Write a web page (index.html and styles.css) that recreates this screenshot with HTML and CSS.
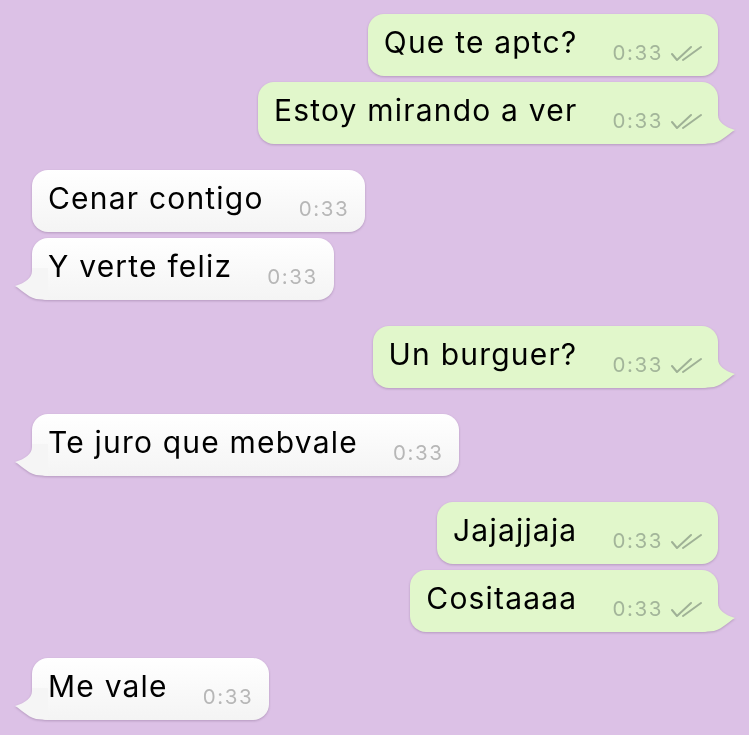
FILE: index.html
```html
<!DOCTYPE html>
<html>
<head>
<meta charset="utf-8">
<link rel="stylesheet" href="styles.css">
</head>
<body>
<div class="chat">
  <div class="group out">
    <div class="row"><div class="bubble"><span class="text">Que te aptc?</span><span class="meta"><span class="time">0:33</span><svg class="ticks" viewBox="0 0 31 17"><path d="M1 9 L6 15 L20 2 M12 15 L30 2"/></svg></span></div></div>
    <div class="row"><div class="bubble tail"><span class="text">Estoy mirando a ver</span><span class="meta"><span class="time">0:33</span><svg class="ticks" viewBox="0 0 31 17"><path d="M1 9 L6 15 L20 2 M12 15 L30 2"/></svg></span><svg class="tailsvg" viewBox="0 0 24 32"><path d="M0 0 L0 3 C0 10 7 15 17 18 C11 21 6 28 -4 31 L-16 32 L-16 0 Z"/></svg></div></div>
  </div>
  <div class="group in">
    <div class="row"><div class="bubble"><span class="text">Cenar contigo</span><span class="meta"><span class="time">0:33</span></span></div></div>
    <div class="row"><div class="bubble tail"><span class="text">Y verte feliz</span><span class="meta"><span class="time">0:33</span></span><svg class="tailsvg" viewBox="0 0 24 32"><path d="M0 0 L0 3 C0 10 7 15 17 18 C11 21 6 28 -4 31 L-16 32 L-16 0 Z"/></svg></div></div>
  </div>
  <div class="group out">
    <div class="row"><div class="bubble tail"><span class="text">Un burguer?</span><span class="meta"><span class="time">0:33</span><svg class="ticks" viewBox="0 0 31 17"><path d="M1 9 L6 15 L20 2 M12 15 L30 2"/></svg></span><svg class="tailsvg" viewBox="0 0 24 32"><path d="M0 0 L0 3 C0 10 7 15 17 18 C11 21 6 28 -4 31 L-16 32 L-16 0 Z"/></svg></div></div>
  </div>
  <div class="group in">
    <div class="row"><div class="bubble tail"><span class="text">Te juro que mebvale</span><span class="meta"><span class="time">0:33</span></span><svg class="tailsvg" viewBox="0 0 24 32"><path d="M0 0 L0 3 C0 10 7 15 17 18 C11 21 6 28 -4 31 L-16 32 L-16 0 Z"/></svg></div></div>
  </div>
  <div class="group out">
    <div class="row"><div class="bubble"><span class="text">Jajajjaja</span><span class="meta"><span class="time">0:33</span><svg class="ticks" viewBox="0 0 31 17"><path d="M1 9 L6 15 L20 2 M12 15 L30 2"/></svg></span></div></div>
    <div class="row"><div class="bubble tail"><span class="text">Cositaaaa</span><span class="meta"><span class="time">0:33</span><svg class="ticks" viewBox="0 0 31 17"><path d="M1 9 L6 15 L20 2 M12 15 L30 2"/></svg></span><svg class="tailsvg" viewBox="0 0 24 32"><path d="M0 0 L0 3 C0 10 7 15 17 18 C11 21 6 28 -4 31 L-16 32 L-16 0 Z"/></svg></div></div>
  </div>
  <div class="group in">
    <div class="row"><div class="bubble tail"><span class="text">Me vale</span><span class="meta"><span class="time">0:33</span></span><svg class="tailsvg" viewBox="0 0 24 32"><path d="M0 0 L0 3 C0 10 7 15 17 18 C11 21 6 28 -4 31 L-16 32 L-16 0 Z"/></svg></div></div>
  </div>
</div>
</body>
</html>
```

FILE: styles.css
```css
html, body {
  margin: 0;
  padding: 0;
  background: #dcc1e6;
  height: 100%;
  overflow: hidden;
}

.chat {
  display: flex;
  flex-direction: column;
  gap: 26px;
  padding: 14px 31px 0 32px;
  font-family: "Inter", "Liberation Sans", sans-serif;
}

.group {
  display: flex;
  flex-direction: column;
  gap: 6px;
}

.row {
  display: flex;
}

.out .row { justify-content: flex-end; }
.in .row { justify-content: flex-start; }

.bubble {
  position: relative;
  display: flex;
  align-items: flex-end;
  height: 62px;
  box-sizing: border-box;
  padding: 0 16px 0 16px;
  border-radius: 16px;
  filter: drop-shadow(0 1px 0.8px rgba(90, 60, 100, 0.3));
}

.out .bubble {
  background: #e1f7cb;
  padding-right: 16px;
}

.in .bubble {
  background: linear-gradient(#ffffff, #f4f4f4);
}

.text {
  font-size: 30px;
  line-height: 34px;
  color: #000;
  padding-bottom: 17px;
  letter-spacing: 1.2px;
}

.meta {
  display: flex;
  align-items: center;
  gap: 8px;
  margin-left: 35px;
  padding-bottom: 11px;
}

.time {
  font-size: 20.5px;
  line-height: 24px;
  letter-spacing: 1.6px;
}

.out .time { color: #a3b59a; }
.in .time { color: #b7b7b7; }

.ticks {
  width: 31px;
  height: 17px;
  fill: none;
  stroke: #9fb196;
  stroke-width: 2;
  stroke-linecap: round;
  stroke-linejoin: round;
}

.tailsvg {
  position: absolute;
  bottom: 0;
  width: 24px;
  height: 32px;
  overflow: visible;
}

.out .tailsvg {
  right: -24px;
  fill: #e1f7cb;
}

.in .tailsvg {
  left: -24px;
  transform: scaleX(-1);
  fill: #f5f5f5;
}
```
